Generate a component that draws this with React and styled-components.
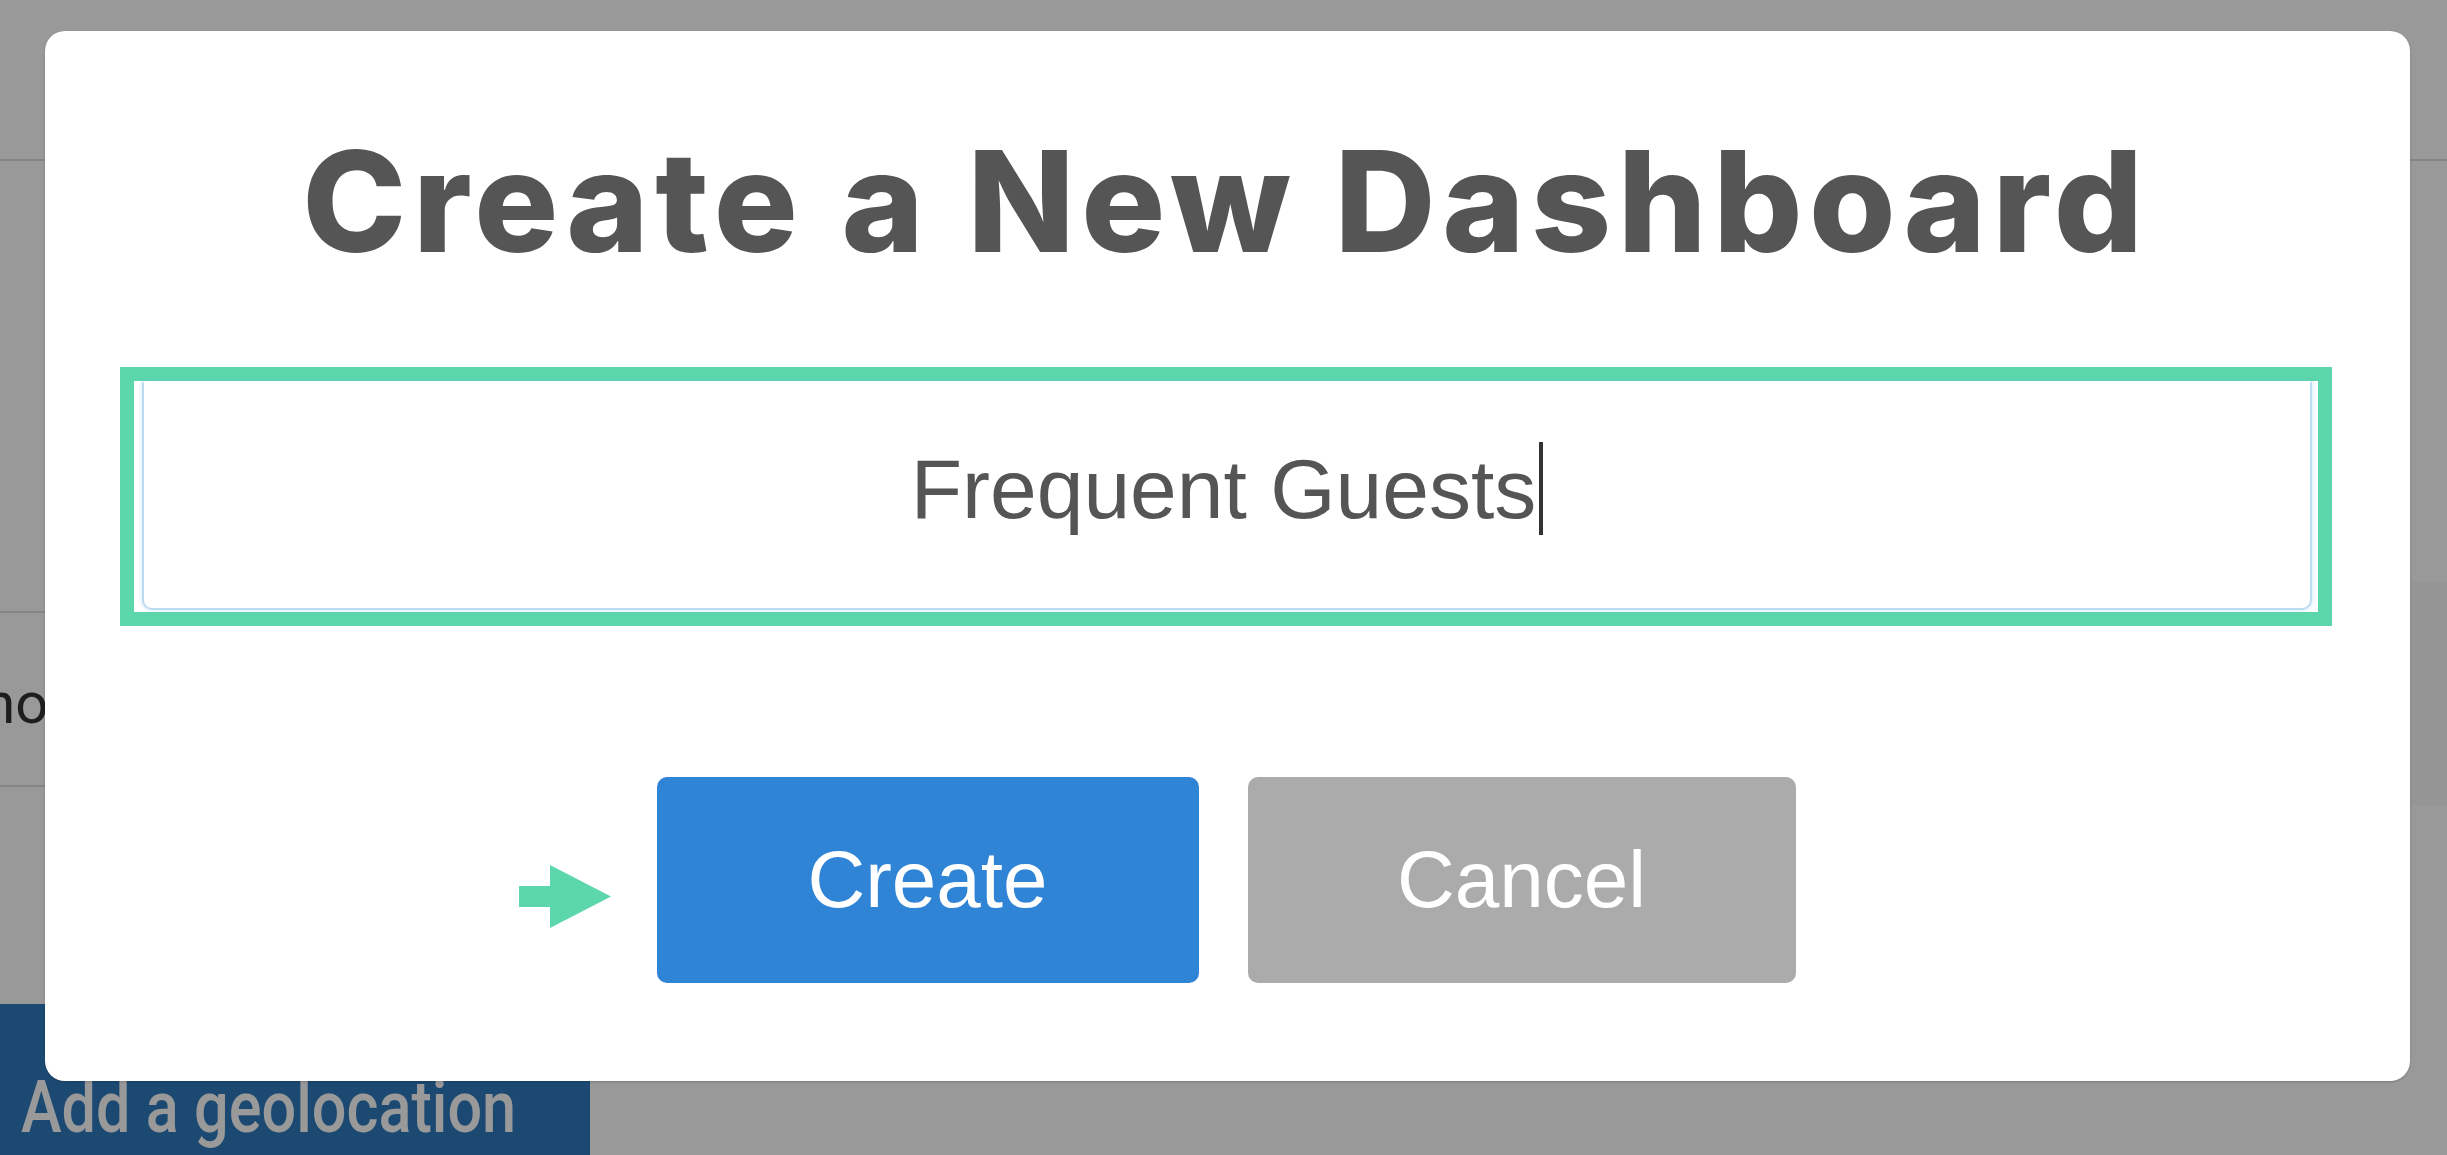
import React from 'react'
import styled, { createGlobalStyle } from 'styled-components'

const GlobalStyle = createGlobalStyle`
  html, body {
    margin: 0;
    padding: 0;
    height: 100%;
    overflow: hidden;
    background: #ffffff;
    font-family: "Liberation Sans", Arial, sans-serif;
  }
  #root {
    height: 100%;
  }
`

// page behind the dialog (dimmed by the overlay)

const Page = styled.div`
  height: 100%;
  display: flex;
  flex-direction: column;
  background: #ffffff;
  overflow: hidden;
`

const Header = styled.div`
  flex-shrink: 0;
  height: 159px;
  border-bottom: 2px solid #dedede;
`

const Body = styled.div`
  flex: 1;
  min-height: 0;
  display: grid;
  grid-template-columns: 1fr 1fr;
  overflow: hidden;
`

const LeftPane = styled.div`
  display: flex;
  flex-direction: column;
  padding-top: 450px;
  overflow: hidden;
`

const Row = styled.div`
  flex-shrink: 0;
  height: 172px;
  display: flex;
  align-items: center;
  border-top: 2px solid #dedede;
  border-bottom: 2px solid #dedede;
  font-family: Roboto, "Liberation Sans", sans-serif;
  font-size: 58px;
  color: #333;
  white-space: nowrap;
`

const RowLabel = styled.span`
  margin-left: -130px;
  padding-top: 8px;
`

const GeoButton = styled.div`
  flex-shrink: 0;
  margin-top: 217px;
  width: 590px;
  height: 200px;
  box-sizing: border-box;
  padding: 68px 0 0 21px;
  background: #2f7bbe;
  color: #ffffff;
  font-family: Roboto, "Liberation Sans", sans-serif;
  font-weight: 500;
  font-size: 72px;
  line-height: 1;
  white-space: nowrap;
`

const Condensed = styled.span`
  display: inline-block;
  transform: scaleX(0.85);
  transform-origin: left center;
`

const RightPane = styled.div`
  display: flex;
  flex-direction: column;
  padding-top: 420px;
`

const Band = styled.div`
  height: 224px;
  background: #f9f9f9;
`

// dialog

const Overlay = styled.div`
  position: fixed;
  inset: 0;
  display: flex;
  align-items: flex-start;
  padding: 31px 0 0 45px;
  background: rgba(0, 0, 0, 0.4);
`

const Modal = styled.div`
  width: 2365px;
  height: 1050px;
  box-sizing: border-box;
  padding: 100px 78px 98px 75px;
  display: flex;
  flex-direction: column;
  align-items: stretch;
  background: #ffffff;
  border-radius: 20px;
  box-shadow: 0 1px 3px rgba(0, 0, 0, 0.2);
`

const Title = styled.h1`
  margin: 0;
  height: 140px;
  text-align: center;
  font-family: Inter, "Noto Sans", sans-serif;
  font-weight: 800;
  font-size: 140px;
  line-height: 1;
  letter-spacing: 6.5px;
  color: #555555;
`

const Highlight = styled.div`
  margin-top: 96px;
  display: flex;
  padding: 0 6px 2px 8px;
  border: 14px solid #5cd6ab;
`

const NameField = styled.div`
  flex: 1;
  height: 229px;
  box-sizing: border-box;
  padding-bottom: 14px;
  display: flex;
  align-items: center;
  justify-content: center;
  border: 2px solid #bcdcf1;
  border-top-color: transparent;
  border-radius: 0 0 10px 10px;
  box-shadow: 0 0 4px rgba(102, 175, 233, 0.35);
  font-family: "Liberation Sans", Arial, sans-serif;
  font-size: 84px;
  line-height: 1;
  color: #555555;
`

const Caret = styled.span`
  display: inline-block;
  width: 4px;
  height: 93px;
  margin-left: 3px;
  background: #333333;
`

const Actions = styled.div`
  margin-top: 151px;
  display: flex;
  justify-content: center;
  gap: 49px;
`

const Button = styled.button`
  position: relative;
  width: ${p => p.$width}px;
  height: 206px;
  border: none;
  border-radius: 10px;
  background: ${p => (p.$primary ? '#3084d6' : '#ababab')};
  color: #ffffff;
  font-family: "Liberation Sans", Arial, sans-serif;
  font-size: 80px;
  line-height: 1;
  cursor: pointer;
`

const Pointer = styled.svg`
  position: absolute;
  right: calc(100% + 46px);
  top: 88px;
`

const Arrow = () => (
  <Pointer width="92" height="63" viewBox="0 0 92 63">
    <path d="M0 21 H31 V0 L92 31.5 L31 63 V42 H0 Z" fill="#5cd6ab" />
  </Pointer>
)

export default function App() {
  return (
    <>
      <GlobalStyle />
      <Page>
        <Header />
        <Body>
          <LeftPane>
            <Row>
              <RowLabel>Casino Lounge</RowLabel>
            </Row>
            <GeoButton>
              <Condensed>Add a geolocation</Condensed>
            </GeoButton>
          </LeftPane>
          <RightPane>
            <Band />
          </RightPane>
        </Body>
      </Page>
      <Overlay>
        <Modal>
          <Title>Create a New Dashboard</Title>
          <Highlight>
            <NameField>
              Frequent Guests
              <Caret />
            </NameField>
          </Highlight>
          <Actions>
            <Button $primary $width={542}>
              <Arrow />
              Create
            </Button>
            <Button $width={548}>Cancel</Button>
          </Actions>
        </Modal>
      </Overlay>
    </>
  )
}
